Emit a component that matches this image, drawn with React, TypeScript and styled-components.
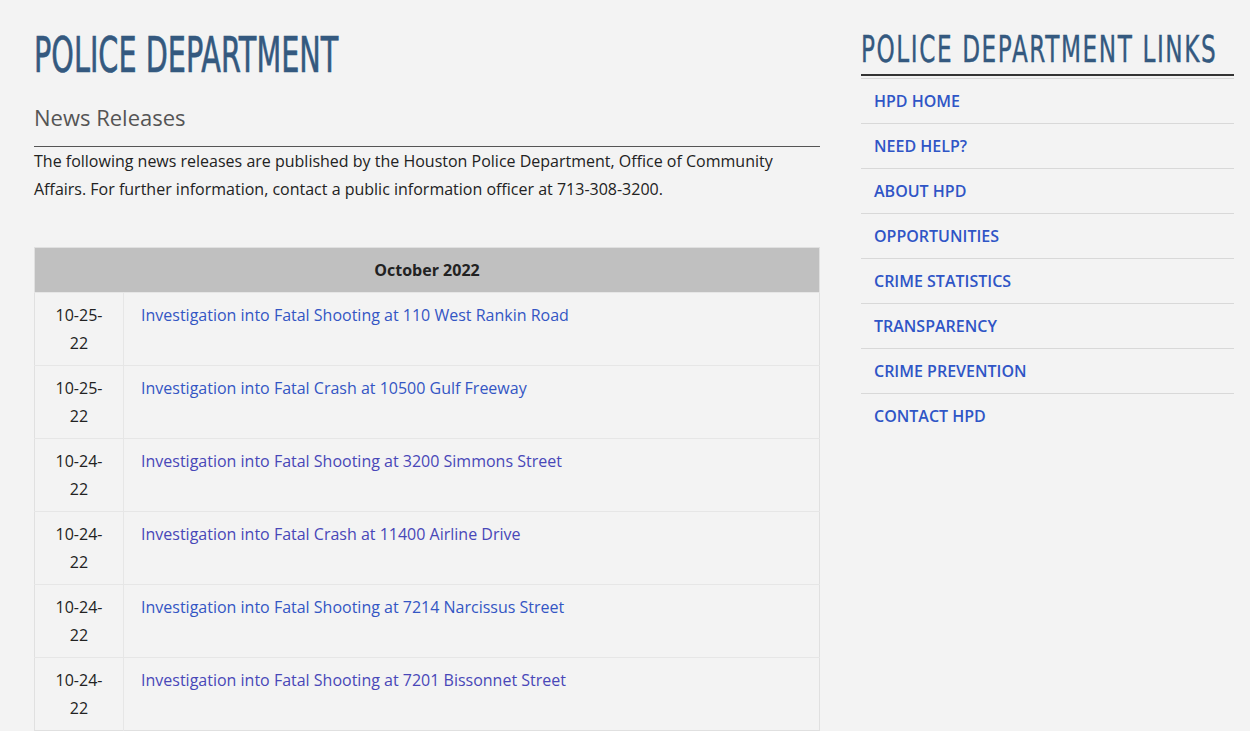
import React, { useLayoutEffect, useRef, useState } from "react";
import styled, { createGlobalStyle } from "styled-components";

const GlobalStyle = createGlobalStyle`
  html, body {
    margin: 0;
    padding: 0;
    background: #f3f3f3;
  }
  body {
    font-family: "Open Sans", "Noto Sans", sans-serif;
    font-size: 16px;
    line-height: 28px;
    color: #222;
  }
`;

const releases = [
  { date: "10-25-22", title: "Investigation into Fatal Shooting at 110 West Rankin Road", visited: false },
  { date: "10-25-22", title: "Investigation into Fatal Crash at 10500 Gulf Freeway", visited: false },
  { date: "10-24-22", title: "Investigation into Fatal Shooting at 3200 Simmons Street", visited: true },
  { date: "10-24-22", title: "Investigation into Fatal Crash at 11400 Airline Drive", visited: true },
  { date: "10-24-22", title: "Investigation into Fatal Shooting at 7214 Narcissus Street", visited: false },
  { date: "10-24-22", title: "Investigation into Fatal Shooting at 7201 Bissonnet Street", visited: true },
];

const links = [
  "HPD HOME",
  "NEED HELP?",
  "ABOUT HPD",
  "OPPORTUNITIES",
  "CRIME STATISTICS",
  "TRANSPARENCY",
  "CRIME PREVENTION",
  "CONTACT HPD",
];

const Page = styled.div`
  display: grid;
  grid-template-columns: 786px 373px;
  column-gap: 41px;
  padding: 0 0 0 34px;
`;

const Main = styled.main`
  padding-top: 30px;
`;

const Title = styled.h1`
  margin: 0;
  font-family: "DejaVu Sans", sans-serif;
  font-weight: 400;
  font-size: 49px;
  line-height: 52px;
  color: #34597f;
  white-space: nowrap;
  -webkit-text-stroke: 0.7px #34597f;
`;

// condensed face isn't installed, so the heading text is squeezed to its width
const Squeeze = styled.span`
  display: inline-block;
  transform-origin: left center;
`;

const FitText = ({ text, width }: { text: string; width: number }) => {
  const ref = useRef<HTMLSpanElement>(null);
  const [natural, setNatural] = useState(width);

  useLayoutEffect(() => {
    if (ref.current) setNatural(ref.current.offsetWidth);
  }, [text, width]);

  return (
    <Squeeze
      ref={ref}
      style={{ transform: `scaleX(${width / natural})`, marginRight: width - natural }}
    >
      {text}
    </Squeeze>
  );
};

const SubTitle = styled.h2`
  margin: 20px 0 0;
  font-weight: 400;
  font-size: 22px;
  line-height: 30px;
  color: #555;
  padding-bottom: 14px;
  border-bottom: 1px solid #555;
`;

const Intro = styled.p`
  margin: 0;
`;

const Table = styled.table`
  margin-top: 44px;
  width: 100%;
  border-collapse: collapse;
  border: 1px solid #e0e0e0;
`;

const HeadCell = styled.th`
  background: #c0c0c0;
  font-weight: 700;
  text-align: center;
  height: 44px;
  padding: 0;
`;

const DateCell = styled.td`
  width: 89px;
  text-align: center;
  vertical-align: top;
  padding: 8px 16px;
  box-sizing: border-box;
  border-top: 1px solid #e6e6e6;
  border-right: 1px solid #e6e6e6;
`;

const TitleCell = styled.td`
  vertical-align: top;
  padding: 8px 17px;
  border-top: 1px solid #e6e6e6;
`;

const ReleaseLink = styled.a<{ $visited: boolean }>`
  color: ${(p) => (p.$visited ? "#4847b8" : "#3356c4")};
  text-decoration: none;
`;

const Aside = styled.aside`
  padding-top: 28px;
`;

const SideTitle = styled.h2`
  margin: 0;
  font-family: "DejaVu Sans", sans-serif;
  font-weight: 400;
  font-size: 37px;
  line-height: 44px;
  letter-spacing: 2.5px;
  color: #34597f;
  white-space: nowrap;
  -webkit-text-stroke: 0.4px #34597f;
  padding-bottom: 2px;
  border-bottom: 2px solid #333;
`;

const LinkList = styled.ul`
  list-style: none;
  margin: 2px 0 0;
  padding: 0;
  border-top: 1px solid #d8d8d8;
`;

const LinkItem = styled.li`
  border-bottom: 1px solid #d8d8d8;
  padding: 8px 13px;
  line-height: 28px;

  &:last-child {
    border-bottom: none;
  }
`;

const SideLink = styled.a`
  color: #2f55c6;
  font-weight: 600;
  text-decoration: none;
`;

const splitDate = (d: string) => {
  const [m, day, y] = d.split("-");
  return (
    <>
      {m}-{day}-<br />
      {y}
    </>
  );
};

export default function App() {
  return (
    <>
      <GlobalStyle />
      <Page>
        <Main>
          <Title>
            <FitText text="POLICE DEPARTMENT" width={304} />
          </Title>
          <SubTitle>News Releases</SubTitle>
          <Intro>
            The following news releases are published by the Houston Police Department, Office of
            Community Affairs. For further information, contact a public information officer at
            713-308-3200.
          </Intro>
          <Table>
            <thead>
              <tr>
                <HeadCell colSpan={2}>October 2022</HeadCell>
              </tr>
            </thead>
            <tbody>
              {releases.map((r, i) => (
                <tr key={i}>
                  <DateCell>{splitDate(r.date)}</DateCell>
                  <TitleCell>
                    <ReleaseLink href="#" $visited={r.visited}>
                      {r.title}
                    </ReleaseLink>
                  </TitleCell>
                </tr>
              ))}
            </tbody>
          </Table>
        </Main>
        <Aside>
          <SideTitle>
            <FitText text="POLICE DEPARTMENT LINKS" width={356} />
          </SideTitle>
          <LinkList>
            {links.map((l) => (
              <LinkItem key={l}>
                <SideLink href="#">{l}</SideLink>
              </LinkItem>
            ))}
          </LinkList>
        </Aside>
      </Page>
    </>
  );
}
